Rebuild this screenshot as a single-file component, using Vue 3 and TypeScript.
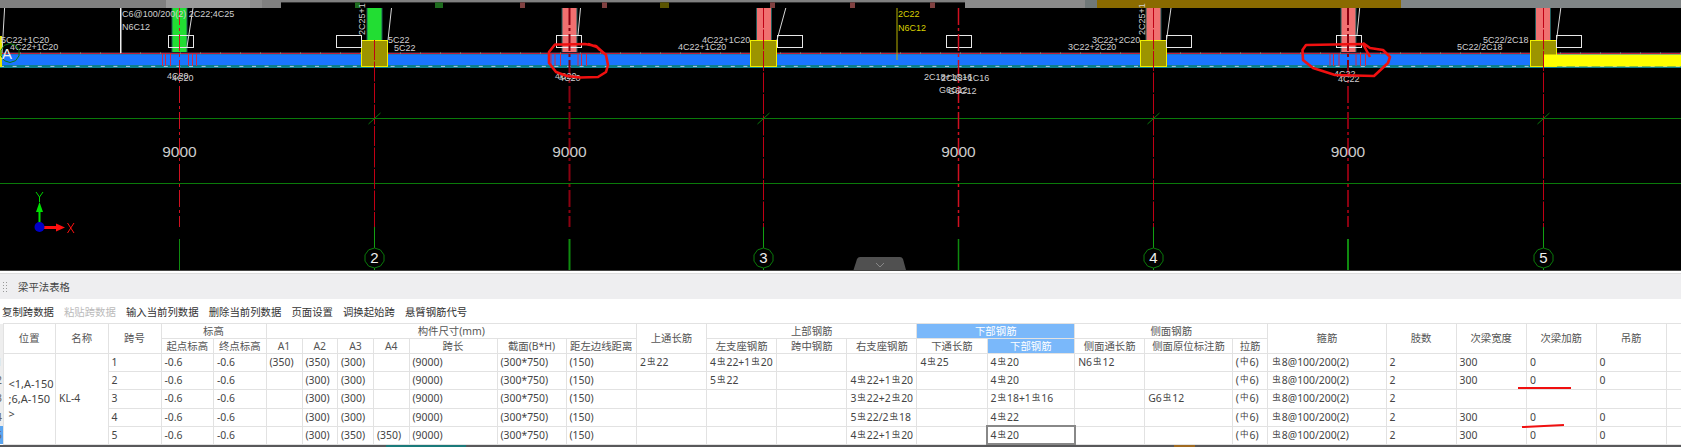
<template>
  <div class="page">
    <svg class="cad" width="1681" height="270" viewBox="0 0 1681 270">
      <rect width="1681" height="270" fill="#000" />

      <!-- strip of the drawing above -->
      <rect v-for="s in topStrip" :key="s.x" :x="s.x" :y="s.y ?? 0" :width="s.w" :height="s.h" :fill="s.c" />

      <!-- columns coming down into the beam -->
      <g v-for="c in upperCols" :key="c.x">
        <rect :x="c.x - 1" y="8" :width="c.w + 2" :height="c.h" fill="#1f5a5a" />
        <rect :x="c.x" y="8" :width="c.w" :height="c.h" :fill="c.c" />
      </g>

      <!-- beam -->
      <rect x="0" y="52" width="1681" height="16" fill="#0d7f8c" />
      <rect x="0" y="52" width="1681" height="2" fill="#123" />
      <rect x="0" y="54.5" width="1681" height="10.5" fill="#1a75ff" />
      <line x1="0" y1="53.4" x2="1681" y2="53.4" stroke="#d81e3c" stroke-width="1" />
      <line x1="0" y1="66.4" x2="1681" y2="66.4" stroke="#b9c8e8" stroke-width="1" stroke-dasharray="4 8.6" />
      <line x1="0" y1="53" x2="1681" y2="53" stroke="#9fb" stroke-opacity=".6" stroke-width="1" stroke-dasharray="1 19" />

      <rect x="0" y="36" width="2" height="31" fill="#e8e800" />
      <rect v-for="x in blockX" :key="x" :x="x + .5" y="40.5" width="26" height="26" fill="#9c9400" stroke="#f2f000" />
      <rect x="1543" y="54.5" width="138" height="12" fill="#ffff00" />

      <!-- stirrup ticks -->
      <line v-for="x in ticks" :key="x" :x1="x" :x2="x" y1="54" y2="66" stroke="#d02848" />

      <!-- section boxes and leaders -->
      <rect v-for="x in boxX" :key="x" :x="x + .5" y="35.5" width="25" height="12" fill="none" stroke="#e8e8e8" />
      <line v-for="l in leaders" :key="l[0]" :x1="l[0]" y1="8" :x2="l[1]" :y2="l[2]" stroke="#d8d8d8" />
      <rect x="120" y="8" width="1.5" height="45" fill="#eee" />
      <line x1="897" y1="8" x2="897" y2="60" stroke="#b8b000" />

      <!-- grid -->
      <line x1="0" y1="118.5" x2="1681" y2="118.5" stroke="#0a7a0a" />
      <line x1="0" y1="183.5" x2="1681" y2="183.5" stroke="#0a7a0a" />
      <g v-for="g in gridAxes" :key="g.n">
        <line :x1="g.x" :x2="g.x" :y1="g.top" y2="227" stroke="#c00014" stroke-dasharray="20 1.5" />
        <line :x1="g.x" :x2="g.x" y1="227" y2="248" stroke="#12a012" />
        <line :x1="g.x" :x2="g.x" y1="268" y2="270" stroke="#12a012" />
        <line :x1="g.x - 6" y1="124" :x2="g.x + 6" y2="113" stroke="#0a7a0a" />
        <polygon :points="bubble(g.x, 258, 10)" fill="#000" stroke="#0a7a0a" />
        <text class="axis-no" :x="g.x" y="263">{{ g.n }}</text>
      </g>
      <g v-for="m in midAxes" :key="m.x">
        <line :x1="m.x" :x2="m.x" y1="8" y2="227" :stroke="m.c" :stroke-width="m.w" stroke-dasharray="17 3 3 3" />
        <line :x1="m.x" :x2="m.x" y1="239" y2="270" stroke="#0f8a0f" :stroke-width="m.w" />
        <text class="span-len" :x="m.x" y="157">9000</text>
      </g>

      <!-- labels -->
      <text v-for="t in labels" :key="t.s + t.x + t.y" class="label" :x="t.x" :y="t.y" :fill="t.c ?? '#d0d0d0'">{{ t.s }}</text>
      <text class="label" transform="translate(365 35) rotate(-90)" fill="#d0d0d0">2C25+1</text>
      <text class="label" transform="translate(1145 35) rotate(-90)" fill="#d0d0d0">2C25+1</text>

      <!-- axis A -->
      <polygon :points="bubble(10, 53, 9.5)" fill="none" stroke="#0a7a0a" />
      <text class="axis-a" x="2" y="59">A</text>

      <!-- xyz marker -->
      <path d="M38.5 226V212H36L39.5 202L43 212H40.5V226Z" fill="#00e000" />
      <path d="M40 226H56V223.5L65 227.5L56 231.5V229H40Z" fill="#ff1010" />
      <circle cx="39.5" cy="227" r="5" fill="#0000c8" />
      <path d="M36 192L39.5 197L43 192M39.5 197V202" fill="none" stroke="#00d000" />
      <path d="M67.5 223L74 233M74 223L67.5 233" fill="none" stroke="#ff1010" />

      <!-- hand drawn marks -->
      <path class="mark" d="M600 50L596 46L585 44L565 44.5L555 44.5L549 52L549 63L556 72L567 76L580 77.5L598 77L606 72L608 65L606 55L597 47L588 44" />
      <path class="mark" d="M1370 57L1363 44L1306 45L1302.5 50L1303 60L1313 68L1335 75L1374 76L1388 63L1390 57L1383 50L1370 48L1363 43" />

      <!-- collapse handle -->
      <path d="M853.5 270L857 259Q858 257 860 257H900Q902 257 903 259L906 270Z" fill="#505050" />
      <path d="M876 263L880 267L884 263" fill="none" stroke="#888" />
    </svg>

    <div class="edge"></div>
    <div class="title-bar">
      <span class="grip"></span>
      <span>梁平法表格</span>
    </div>
    <div class="toolbar">
      <span v-for="a in actions" :key="a.label" :class="{ disabled: a.disabled }">{{ a.label }}</span>
    </div>

    <table class="grid">
      <colgroup>
        <col v-for="(w, i) in colWidths" :key="i" :style="{ width: `${w}px` }" />
      </colgroup>
      <thead>
        <tr>
          <th rowspan="2" class="row-head"></th>
          <th rowspan="2">位置</th>
          <th rowspan="2">名称</th>
          <th rowspan="2">跨号</th>
          <th colspan="2">标高</th>
          <th colspan="7">构件尺寸(mm)</th>
          <th rowspan="2">上通长筋</th>
          <th colspan="3">上部钢筋</th>
          <th colspan="2" class="active">下部钢筋</th>
          <th colspan="3">侧面钢筋</th>
          <th rowspan="2">箍筋</th>
          <th rowspan="2">肢数</th>
          <th rowspan="2">次梁宽度</th>
          <th rowspan="2">次梁加筋</th>
          <th rowspan="2">吊筋</th>
          <th rowspan="2" class="filler"></th>
        </tr>
        <tr>
          <th v-for="h in subHeads" :key="h" :class="{ active: h === '下部钢筋' }">{{ h }}</th>
        </tr>
      </thead>
      <tbody>
        <tr v-for="(row, r) in rows" :key="r">
          <th class="row-head" :class="{ current: r === 4 }"><span>{{ r + 1 }}</span></th>
          <template v-if="r === 0">
            <td rowspan="5" class="place">&lt;1,A-150<br />;6,A-150<br />&gt;</td>
            <td rowspan="5">KL-4</td>
          </template>
          <td v-for="(cell, c) in row" :key="c" :class="{ selected: r === 4 && c === 15 }">
            <template v-for="(p, k) in rebar(cell)" :key="k">
              <span v-if="p.sym" class="sym">{{ p.text }}</span>
              <template v-else>{{ p.text }}</template>
            </template>
          </td>
          <td class="filler"></td>
        </tr>
      </tbody>
    </table>

    <div class="status">
      <span class="status-tab"></span>
      <span class="status-tail"></span>
    </div>

    <i class="underline first"></i>
    <i class="underline second"></i>
  </div>
</template>

<script setup lang="ts">
const topStrip: { x: number; y?: number; w: number; h: number; c: string }[] = [
  { x: 0, w: 281, h: 8, c: '#808080' },
  { x: 166, w: 84, h: 8, c: '#9a9a9a' },
  { x: 250, w: 12, h: 8, c: '#8e8e8e' },
  { x: 281, w: 684, h: 2.4, c: '#808080' },
  { x: 965, w: 120, h: 8, c: '#8a8a8a' },
  { x: 1085, w: 12, h: 8, c: '#707878' },
  { x: 1097, w: 304, h: 8, c: '#8a6a00' },
  { x: 1401, w: 280, h: 8, c: '#808586' },
  { x: 355, y: 2.4, w: 5, h: 5.6, c: '#1d6b1d' },
  { x: 435, y: 2.4, w: 8, h: 5.6, c: '#1d6b1d' },
  { x: 520, y: 2.4, w: 5, h: 5.6, c: '#804040' },
  { x: 602, y: 2.4, w: 5, h: 5.6, c: '#804040' },
  { x: 660, y: 2.4, w: 9, h: 5.6, c: '#5a5400' },
  { x: 770, y: 2.4, w: 5, h: 5.6, c: '#804040' },
  { x: 850, y: 2.4, w: 5, h: 5.6, c: '#804040' },
  { x: 930, y: 2.4, w: 5, h: 5.6, c: '#804040' },
]

const upperCols = [
  { x: 172.5, w: 14, h: 45, c: '#22dd33' },
  { x: 367.5, w: 14, h: 32, c: '#22dd33' },
  { x: 562.5, w: 14, h: 45, c: '#f07070' },
  { x: 757, w: 14, h: 32, c: '#f07070' },
  { x: 1146.5, w: 14, h: 32, c: '#f07070' },
  { x: 1341.5, w: 14, h: 45, c: '#f07070' },
  { x: 1536, w: 14, h: 32, c: '#f07070' },
]

const blockX = [361, 750, 1140, 1530]
const boxX = [168, 336, 556, 777, 946, 1166, 1336, 1556]
const ticks = [162.5, 165.5, 170.5, 188.5, 192.5, 196.5, 551, 555, 560.5, 578, 581.5, 586.5, 1330, 1333.5, 1339, 1356, 1360.5, 1365.5]
const leaders = [
  [4.6, 2, 53],
  [391.5, 388, 40],
  [580.5, 578, 35],
  [785.8, 777, 40],
  [1171, 1166.5, 40],
  [1359.7, 1357, 35],
  [1560.8, 1556.5, 40],
  [193, 187, 47],
]

const gridAxes = [
  { n: 2, x: 374.5, top: 40 },
  { n: 3, x: 763.5, top: 8 },
  { n: 4, x: 1153.5, top: 8 },
  { n: 5, x: 1543.5, top: 8 },
]
const midAxes = [
  { x: 179.5, c: '#d01020', w: 1 },
  { x: 569.5, c: '#8a0010', w: 2 },
  { x: 958.5, c: '#d01020', w: 1.5 },
  { x: 1348, c: '#8a0010', w: 2 },
]

const labels: { s: string; x: number; y: number; c?: string }[] = [
  { s: 'C6@100/200(2) 2C22;4C25', x: 122, y: 17 },
  { s: 'N6C12', x: 122, y: 30 },
  { s: '5C22+1C20', x: 1, y: 43 },
  { s: '4C22+1C20', x: 10, y: 50 },
  { s: '4C20', x: 167, y: 79 },
  { s: '4C20', x: 172, y: 81 },
  { s: '5C22', x: 388, y: 43 },
  { s: '5C22', x: 394, y: 51 },
  { s: '4C20', x: 555, y: 79 },
  { s: '4C20', x: 559, y: 81 },
  { s: '4C22+1C20', x: 702, y: 43 },
  { s: '4C22+1C20', x: 678, y: 50 },
  { s: '2C22', x: 898, y: 17, c: '#d8d000' },
  { s: 'N6C12', x: 898, y: 31, c: '#d8d000' },
  { s: '2C18+1C16', x: 924, y: 80 },
  { s: '2C18+1C16', x: 941, y: 81 },
  { s: 'G6C12', x: 939, y: 93 },
  { s: 'G6C12', x: 948, y: 94 },
  { s: '3C22+2C20', x: 1092, y: 43 },
  { s: '3C22+2C20', x: 1068, y: 50 },
  { s: '4C22', x: 1334, y: 77 },
  { s: '4C22', x: 1338, y: 82 },
  { s: '5C22/2C18', x: 1483, y: 43 },
  { s: '5C22/2C18', x: 1457, y: 50 },
]

// regular polygon used for the axis bubbles
function bubble(cx: number, cy: number, r: number): string {
  const pts: string[] = []
  for (let i = 0; i < 10; i++) {
    const a = (i / 10) * Math.PI * 2 + Math.PI / 10
    pts.push(`${(cx + r * Math.cos(a)).toFixed(1)},${(cy + r * Math.sin(a)).toFixed(1)}`)
  }
  return pts.join(' ')
}

const actions = [
  { label: '复制跨数据' },
  { label: '粘贴跨数据', disabled: true },
  { label: '输入当前列数据' },
  { label: '删除当前列数据' },
  { label: '页面设置' },
  { label: '调换起始跨' },
  { label: '悬臂钢筋代号' },
]

const edges = [0, 3, 55.5, 108, 161, 213.5, 266, 302, 337.5, 373.5, 409, 497, 566, 636.4, 706.4, 776.8, 846.8, 916.8, 987, 1074.6, 1144.6, 1232.3, 1267.8, 1386, 1456, 1526.4, 1596, 1666, 1681]
const colWidths = edges.slice(1).map((e, i) => e - edges[i])

const subHeads = [
  '起点标高', '终点标高', 'A1', 'A2', 'A3', 'A4', '跨长', '截面(B*H)', '距左边线距离',
  '左支座钢筋', '跨中钢筋', '右支座钢筋', '下通长筋', '下部钢筋',
  '侧面通长筋', '侧面原位标注筋', '拉筋',
]

const tail = ['(中6)', '#8@100/200(2)', '2']
const rows: string[][] = [
  ['1', '-0.6', '-0.6', '(350)', '(350)', '(300)', '', '(9000)', '(300*750)', '(150)', '2#22', '4#22+1#20', '', '', '4#25', '4#20', 'N6#12', '', ...tail, '300', '0', '0'],
  ['2', '-0.6', '-0.6', '', '(300)', '(300)', '', '(9000)', '(300*750)', '(150)', '', '5#22', '', '4#22+1#20', '', '4#20', '', '', ...tail, '300', '0', '0'],
  ['3', '-0.6', '-0.6', '', '(300)', '(300)', '', '(9000)', '(300*750)', '(150)', '', '', '', '3#22+2#20', '', '2#18+1#16', '', 'G6#12', ...tail, '', '', ''],
  ['4', '-0.6', '-0.6', '', '(300)', '(300)', '', '(9000)', '(300*750)', '(150)', '', '', '', '5#22/2#18', '', '4#22', '', '', ...tail, '300', '0', '0'],
  ['5', '-0.6', '-0.6', '', '(300)', '(350)', '(350)', '(9000)', '(300*750)', '(150)', '', '', '', '4#22+1#20', '', '4#20', '', '', ...tail, '300', '0', '0'],
]

// '#' stands for the grade symbol, shown small and raised like in the software
function rebar(cell: string): { text: string; sym: boolean }[] {
  const out: { text: string; sym: boolean }[] = []
  cell.split(/(#|中)/).forEach((text) => {
    if (text === '#') out.push({ text: '虫', sym: true })
    else if (text === '中') out.push({ text, sym: true })
    else if (text) out.push({ text, sym: false })
  })
  return out
}
</script>

<style scoped>
.page {
  position: relative;
  width: 1681px;
  height: 447px;
  overflow: hidden;
  background: #fff;
  font-family: "Noto Sans", "Noto Sans CJK SC", sans-serif;
  font-size: 10.4px;
  color: #444;
}

.cad {
  display: block;
}

.label {
  font-family: "Liberation Sans", sans-serif;
  font-size: 9px;
}

.span-len {
  font-family: "Liberation Sans", sans-serif;
  font-size: 15.5px;
  fill: #ccc;
  text-anchor: middle;
}

.axis-no {
  font-family: "Liberation Sans", sans-serif;
  font-size: 15px;
  fill: #eee;
  text-anchor: middle;
}

.axis-a {
  font-family: "Liberation Sans", sans-serif;
  font-size: 15px;
  fill: #eee;
}

.mark {
  fill: none;
  stroke: #f01010;
  stroke-width: 2.6;
  stroke-linejoin: round;
}

.edge {
  height: 4px;
  border-top: 1px solid #444;
  border-bottom: 1px solid #ddd;
  box-sizing: border-box;
}

.title-bar {
  display: flex;
  align-items: center;
  gap: 10px;
  height: 25px;
  padding-left: 2px;
  background: #eeeef0;
}

.grip {
  width: 6px;
  height: 12px;
  background-image: radial-gradient(#999 40%, transparent 45%);
  background-size: 3px 3px;
}

.toolbar {
  display: flex;
  align-items: center;
  gap: 10px;
  height: 24px;
  padding-left: 2px;
  color: #333;
}

.toolbar .disabled {
  color: #bbb;
}

.grid {
  table-layout: fixed;
  width: 1681px;
  border-collapse: collapse;
}

.grid th,
.grid td {
  border: 1px solid #e2e2e2;
  padding: 0;
  overflow: hidden;
  white-space: nowrap;
  box-sizing: border-box;
}

.grid th {
  height: 15px;
  font-weight: 400;
  line-height: 13px;
  color: #555;
  background: #fff;
}

.grid td {
  height: 18.2px;
  padding-left: 3px;
  line-height: 15px;
}

.grid .row-head {
  background: #eee;
  border: 0;
  text-align: left;
}

.row-head span {
  display: block;
  margin-left: -4px;
  color: #666;
}

.grid .row-head.current {
  background: #5aa5f0;
}

.grid .active {
  background: #7ab8fa;
  color: #fff;
}

.grid .filler {
  border-left: 1px solid #e2e2e2;
  border-right: 0;
}

.grid .place {
  font-size: 11px;
  padding-left: 5px;
}

.grid .selected {
  outline: 2px solid #888;
  outline-offset: -1px;
}

.sym {
  font-size: 8.5px;
  position: relative;
  top: -2px;
  margin: 0 1px;
}

.status {
  display: flex;
  height: 4px;
  background: #58585a;
}

.status-tab {
  width: 80px;
  margin-left: 386px;
  background: #1a7a7a;
}

.status-tail {
  width: 21px;
  margin-left: 708px;
  background: #a06a20;
}

.underline {
  position: absolute;
  height: 2px;
  background: #f01010;
}

.underline.first {
  left: 1518px;
  top: 387px;
  width: 53px;
}

.underline.second {
  left: 1522px;
  top: 425px;
  width: 42px;
  transform: rotate(-3deg);
}
</style>

<style>
body {
  margin: 0;
  overflow: hidden;
}
</style>
